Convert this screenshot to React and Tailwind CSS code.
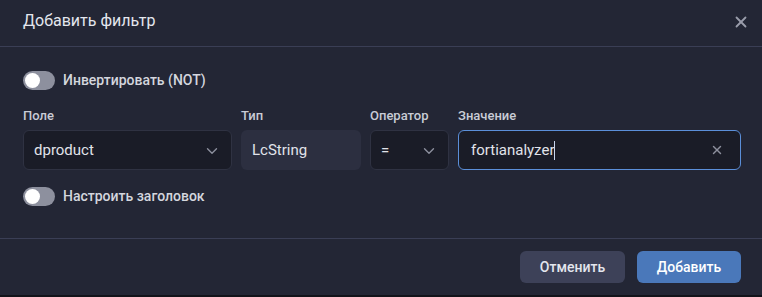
import { ChevronDown, X } from 'lucide-react';

function Toggle({ label }) {
  return (
    <div className="flex items-center gap-2 h-5">
      <div className="w-8 h-[19px] rounded-full bg-[#8d909e] flex items-center px-[2px]">
        <div className="w-[15px] h-[15px] rounded-full bg-white" />
      </div>
      <span className="text-[14px] font-medium text-[#d4d6de]">{label}</span>
    </div>
  );
}

function Field({ label, width, children }) {
  return (
    <div className={`flex flex-col ${width}`}>
      <span className="text-[13px] font-medium text-[#c9ccd6] leading-4 mb-[6px]">{label}</span>
      {children}
    </div>
  );
}

export default function App() {
  return (
    <div className="w-[762px] h-[297px] bg-[#12131a] font-['Roboto',sans-serif] overflow-hidden">
      <div className="h-[295px] bg-[#232635] flex flex-col">
        <div className="h-[47px] border-b border-[#3a3e55] flex items-center justify-between pl-[23px] pr-[12px] shrink-0">
          <h2 className="text-[16px] text-[#e4e6ee] -mt-[4px]">Добавить фильтр</h2>
          <X size={18} strokeWidth={2.4} className="text-[#9a9dab] -mt-[3px]" />
        </div>

        <div className="pl-[23px] pr-[21px] pt-[23px] pb-[32px] border-b border-[#3a3e55]">
          <Toggle label="Инвертировать (NOT)" />

          <div className="flex gap-[9px] mt-[18px]">
            <Field label="Поле" width="w-[209px]">
              <div className="h-10 rounded-md bg-[#1a1c27] border border-[#2f3242] flex items-center justify-between pl-[10px] pr-[10px]">
                <span className="text-[15px] text-[#e1e3ea]">dproduct</span>
                <ChevronDown size={18} strokeWidth={1.8} className="text-[#8d909e] mt-[2px]" />
              </div>
            </Field>
            <Field label="Тип" width="w-[120px]">
              <div className="h-10 rounded-md bg-[#2c2f40] flex items-center pl-[11px]">
                <span className="text-[15px] text-[#e1e3ea]">LcString</span>
              </div>
            </Field>
            <Field label="Оператор" width="w-[79px]">
              <div className="h-10 rounded-md bg-[#1a1c27] border border-[#2f3242] flex items-center justify-between pl-[10px] pr-[10px]">
                <span className="text-[15px] text-[#e1e3ea]">=</span>
                <ChevronDown size={18} strokeWidth={1.8} className="text-[#8d909e] mt-[2px]" />
              </div>
            </Field>
            <Field label="Значение" width="flex-1">
              <div className="h-10 rounded-md bg-[#1a1c27] border border-[#5b8fd9] flex items-center justify-between pl-[12px] pr-[16px]">
                <span className="text-[15px] text-[#e1e3ea] flex items-center">
                  fortianalyzer<span className="inline-block w-px h-[19px] bg-[#c9d6ee]" />
                </span>
                <X size={14} strokeWidth={2.4} className="text-[#8d909e]" />
              </div>
            </Field>
          </div>

          <div className="mt-[16px]">
            <Toggle label="Настроить заголовок" />
          </div>
        </div>

        <div className="flex justify-end gap-3 pr-[21px] pt-[12px]">
          <button className="w-[105px] h-8 rounded-md bg-[#3d4158] text-[14px] font-medium text-[#e4e6ee]">Отменить</button>
          <button className="w-[104px] h-8 rounded-md bg-[#4a78ba] text-[14px] font-medium text-white">Добавить</button>
        </div>
      </div>
    </div>
  );
}
